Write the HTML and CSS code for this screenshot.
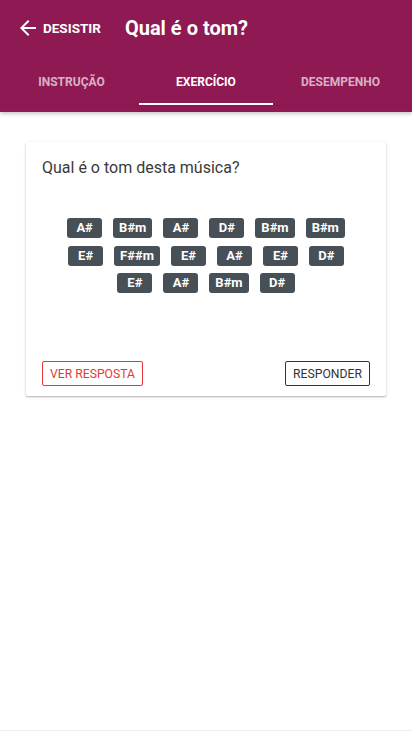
FILE: index.html
```html
<!DOCTYPE html>
<html lang="pt">
<head>
<meta charset="utf-8">
<title>Qual é o tom?</title>
<link rel="stylesheet" href="styles.css">
</head>
<body>
<div class="page">
  <header class="appbar">
    <div class="toolbar">
      <button class="back">
        <svg class="back-icon" viewBox="0 0 24 24" width="24" height="24"><path fill="#fff" d="M20 11H7.83l5.59-5.59L12 4l-8 8 8 8 1.41-1.41L7.83 13H20v-2z"/></svg>
        <span class="back-label">DESISTIR</span>
      </button>
      <h1 class="title">Qual é o tom?</h1>
    </div>
    <nav class="tabs">
      <div class="tab">INSTRUÇÃO</div>
      <div class="tab active">EXERCÍCIO</div>
      <div class="tab">DESEMPENHO</div>
    </nav>
  </header>
  <main class="content">
    <section class="card">
      <p class="question">Qual é o tom desta música?</p>
      <div class="chips">
        <div class="chip-row">
          <span class="chip">A#</span><span class="chip">B#m</span><span class="chip">A#</span><span class="chip">D#</span><span class="chip">B#m</span><span class="chip">B#m</span>
        </div>
        <div class="chip-row">
          <span class="chip">E#</span><span class="chip">F##m</span><span class="chip">E#</span><span class="chip">A#</span><span class="chip">E#</span><span class="chip">D#</span>
        </div>
        <div class="chip-row">
          <span class="chip">E#</span><span class="chip">A#</span><span class="chip">B#m</span><span class="chip">D#</span>
        </div>
      </div>
      <div class="actions">
        <button class="btn btn-red">VER RESPOSTA</button>
        <button class="btn btn-dark">RESPONDER</button>
      </div>
    </section>
  </main>
</div>
</body>
</html>
```

FILE: styles.css
```css
* { box-sizing: border-box; }
html, body { margin: 0; padding: 0; }
body {
  font-family: Roboto, "Noto Sans", sans-serif;
  background: #fff;
}
.page {
  min-height: 731px;
  display: flex;
  flex-direction: column;
  border-bottom: 1px solid #eeeeee;
}
.appbar {
  background: #8e1953;
  height: 112px;
  box-shadow: 0 2px 4px rgba(0,0,0,0.22);
  position: relative;
  z-index: 1;
}
.toolbar {
  height: 56px;
  display: flex;
  align-items: center;
  padding-left: 16px;
}
.back {
  display: flex;
  align-items: center;
  background: none;
  border: 0;
  padding: 0;
  color: #fff;
  font-family: inherit;
  cursor: pointer;
}
.back-icon { display: block; }
.back-label {
  margin-left: 3px;
  font-size: 13.5px;
  font-weight: 700;
}
.title {
  margin: 0 0 0 24px;
  color: #fff;
  font-size: 20px;
  font-weight: 700;
}
.tabs {
  display: flex;
  height: 49px;
  padding: 0 4.25px;
  box-shadow: 0 1px 0 rgba(0,0,0,0.06);
}
.tab {
  flex: 1;
  display: flex;
  align-items: center;
  justify-content: center;
  font-size: 12px;
  font-weight: 700;
  color: rgba(255,255,255,0.68);
  padding-top: 3px;
}
.tab.active {
  color: #fff;
  box-shadow: inset 0 -2px 0 #fff;
}
.content {
  flex: 1;
  padding: 30px 26px;
}
.card {
  background: #fff;
  border-radius: 2px;
  box-shadow: 0 1px 3px rgba(0,0,0,0.22), 0 1px 1px rgba(0,0,0,0.12);
  padding: 14px 16px 10px;
}
.question {
  margin: 0;
  font-size: 16px;
  line-height: 24px;
  color: #3a3a3a;
}
.chips {
  margin-top: 38px;
  display: flex;
  flex-direction: column;
  gap: 7.5px;
}
.chip-row {
  display: flex;
  justify-content: center;
  gap: 11px;
}
.chip {
  min-width: 35px;
  height: 20px;
  padding: 0 6px;
  border-radius: 3px;
  background: #474f57;
  color: #fff;
  font-size: 13px;
  font-weight: 700;
  line-height: 20px;
  text-align: center;
}
.actions {
  margin-top: 68px;
  display: flex;
  justify-content: space-between;
}
.btn {
  height: 25px;
  padding: 0 7px;
  background: #fff;
  border-radius: 2px;
  font-family: inherit;
  font-size: 12.2px;
}
.btn-red {
  border: 1px solid #e53935;
  color: #e53935;
}
.btn-dark {
  border: 1px solid #333;
  color: #333;
}
```
